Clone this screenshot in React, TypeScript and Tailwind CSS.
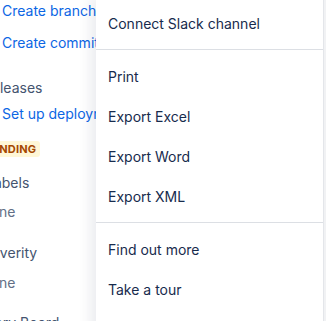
const menuGroups = [
  ['Connect Slack channel'],
  ['Print', 'Export Excel', 'Export Word', 'Export XML'],
  ['Find out more', 'Take a tour'],
];

function MenuItem({ label }: { label: string }) {
  return (
    <div className="h-10 flex items-center px-3 text-sm text-[#172b4d] whitespace-nowrap">
      {label}
    </div>
  );
}

export default function App() {
  return (
    <div className="relative w-[326px] h-[321px] overflow-hidden bg-white font-['Inter',sans-serif]">
      {/* issue sidebar behind the menu */}
      <div className="flex flex-col ml-[-17px] text-sm whitespace-nowrap">
        <div className="h-[22px] flex items-center pl-[19px] text-[#0c66e4]">Create branch</div>
        <div className="h-[22px] mt-[10px] flex items-center pl-[19px] text-[#0c66e4]">Create commit</div>
        <div className="h-[22px] mt-[23px] flex items-center text-[#44546f]">Releases</div>
        <div className="h-[22px] mt-[4px] flex items-center pl-[19px] text-[#0c66e4]">Set up deployment</div>
        <div className="h-[16px] mt-[16px] flex items-center">
          <span className="ml-[-2px] h-4 px-1 rounded-[3px] bg-[#fff7d6] text-[#a54800] text-[11px] font-bold leading-4 uppercase tracking-[0.2px]">
            Pending
          </span>
        </div>
        <div className="h-[22px] mt-[15px] flex items-center ml-[3px] text-[#44546f]">Labels</div>
        <div className="h-[22px] mt-[7px] flex items-center ml-[-3px] text-[#626f86]">None</div>
        <div className="h-[22px] mt-[19px] flex items-center text-[#44546f]">Severity</div>
        <div className="h-[22px] mt-[8px] flex items-center ml-[-3px] text-[#626f86]">None</div>
        <div className="h-[22px] mt-[18px] flex items-center ml-[-2px] text-[#44546f]">Story Board</div>
      </div>

      {/* dropdown menu, runs past the bottom of the view */}
      <div className="absolute left-[96px] top-[-3px] w-[227px] bg-white shadow-[-6px_0_12px_rgba(9,30,66,0.08)]">
        {menuGroups.map((group, i) => (
          <div
            key={i}
            className={
              i === 0
                ? 'pt-[7px] pb-[5px]'
                : i === menuGroups.length - 1
                  ? 'pt-[7px] pb-6 border-t border-[#dcdfe4]'
                  : 'pt-[7px] pb-[5px] border-t border-[#dcdfe4]'
            }
          >
            {group.map(label => (
              <MenuItem key={label} label={label} />
            ))}
          </div>
        ))}
      </div>

      {/* page edge */}
      <div className="absolute right-0 top-0 w-[3px] h-full bg-[#f1f2f4] border-l border-[#e4e6ea]" />
    </div>
  );
}
